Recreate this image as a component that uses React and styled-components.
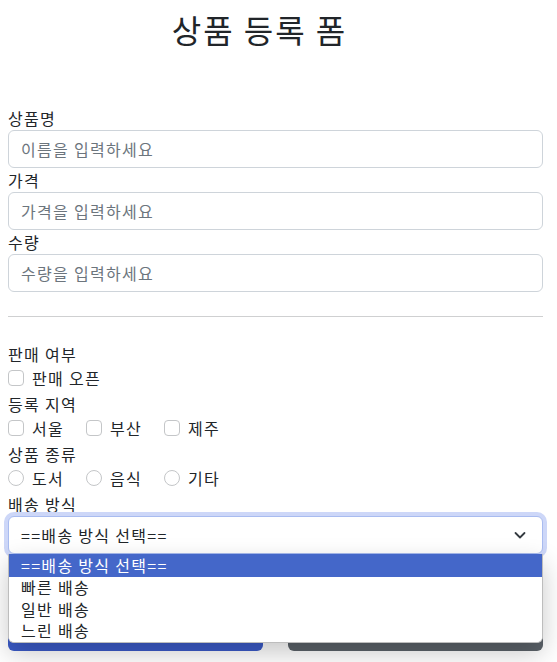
import React from "react";
import styled, { createGlobalStyle } from "styled-components";

const GlobalStyle = createGlobalStyle`
  html, body { margin: 0; padding: 0; background: #ffffff; }
  body {
    font-family: "Noto Sans CJK KR", "Noto Sans", sans-serif;
    color: #212529;
    font-size: 16px;
    letter-spacing: 1.3px;
  }
  * { box-sizing: border-box; }
`;

const Page = styled.div`
  padding: 10px 14px 0 8px;
  height: 662px;
  overflow: hidden;
`;

const Title = styled.h2`
  margin: 0 0 58px;
  padding-right: 32px;
  text-align: center;
  font-size: 32px;
  line-height: 38px;
  font-weight: 400;
  letter-spacing: 2px;
  color: #212529;
`;

const Label = styled.div`
  font-size: 16px;
  line-height: 24px;
  height: 24px;
  white-space: nowrap;
`;

const Input = styled.input`
  display: block;
  width: 100%;
  height: 38px;
  padding: 6px 12px;
  font-family: inherit;
  font-size: 16px;
  letter-spacing: 1.3px;
  line-height: 24px;
  color: #212529;
  border: 1px solid #ced4da;
  border-radius: 6px;
  background: #fff;
  outline: none;
  &::placeholder { color: #6c757d; }
`;

const Divider = styled.hr`
  margin: 24px 0 25px;
  border: 0;
  border-top: 1px solid #cfd0d1;
`;

const CheckRow = styled.div`
  display: flex;
  height: 24px;
  margin-bottom: 2px;
`;

const CheckItem = styled.label`
  display: flex;
  align-items: flex-start;
  gap: 8px;
  width: ${(p) => (p.$wide ? "auto" : "78px")};
  flex: none;
  white-space: nowrap;
  line-height: 24px;
  font-size: 16px;
`;

const Box = styled.span`
  flex: none;
  width: 16px;
  height: 16px;
  margin-top: 4px;
  border: 1px solid #c4c6c8;
  border-radius: ${(p) => (p.$round ? "50%" : "4px")};
  background: #fff;
`;

const SelectWrap = styled.div`
  position: relative;
`;

const SelectBox = styled.div`
  display: flex;
  align-items: center;
  justify-content: space-between;
  height: 38px;
  padding: 6px 14px 6px 12px;
  border: 1px solid #a9bcf0;
  border-radius: 6px;
  box-shadow: 0 0 0 4px #cdd7f8;
  background: #fff;
  font-size: 16px;
  line-height: 24px;
`;

const Popup = styled.div`
  position: absolute;
  top: 100%;
  left: 0;
  right: 0;
  z-index: 5;
  background: #fff;
  border: 1px solid #bdbdbd;
  border-top: 0;
  border-radius: 0 0 6px 6px;
  overflow: hidden;
  box-shadow: 0 10px 26px rgba(0, 0, 0, 0.22);
`;

const Option = styled.div`
  height: ${(p) => (p.$first ? "23px" : "21.5px")};
  line-height: ${(p) => (p.$first ? "23px" : "21.5px")};
  padding-left: 12px;
  font-size: 16px;
  white-space: nowrap;
  background: ${(p) => (p.$active ? "#4467c9" : "#fff")};
  color: ${(p) => (p.$active ? "#fff" : "#212529")};
`;

const ButtonRow = styled.div`
  display: flex;
  gap: 25px;
  margin-top: 51px;
`;

const Button = styled.button`
  flex: 1;
  height: 46px;
  border: 0;
  border-radius: 6px;
  font-family: inherit;
  font-size: 16px;
  color: #fff;
  background: ${(p) => (p.$variant === "secondary" ? "#5c636a" : "#3b5bc8")};
`;

function Chevron() {
  return (
    <svg width="16" height="16" viewBox="0 0 16 16" fill="none">
      <path
        d="M3.5 6l4.5 4.5L12.5 6"
        stroke="#343a40"
        strokeWidth="1.8"
        strokeLinecap="round"
        strokeLinejoin="round"
      />
    </svg>
  );
}

function Check({ round, wide, children }) {
  return (
    <CheckItem $wide={wide}>
      <Box $round={round} />
      {children}
    </CheckItem>
  );
}

export default function App() {
  return (
    <>
      <GlobalStyle />
      <Page>
        <Title>상품 등록 폼</Title>

        <Label>상품명</Label>
        <Input placeholder="이름을 입력하세요" />
        <Label>가격</Label>
        <Input placeholder="가격을 입력하세요" />
        <Label>수량</Label>
        <Input placeholder="수량을 입력하세요" />

        <Divider />

        <Label>판매 여부</Label>
        <CheckRow>
          <Check wide>판매 오픈</Check>
        </CheckRow>

        <Label>등록 지역</Label>
        <CheckRow>
          <Check>서울</Check>
          <Check>부산</Check>
          <Check>제주</Check>
        </CheckRow>

        <Label>상품 종류</Label>
        <CheckRow>
          <Check round>도서</Check>
          <Check round>음식</Check>
          <Check round>기타</Check>
        </CheckRow>

        <Label>배송 방식</Label>
        <SelectWrap>
          <SelectBox>
            <span>==배송 방식 선택==</span>
            <Chevron />
          </SelectBox>
          <Popup>
            <Option $active $first>==배송 방식 선택==</Option>
            <Option>빠른 배송</Option>
            <Option>일반 배송</Option>
            <Option>느린 배송</Option>
          </Popup>
        </SelectWrap>

        <ButtonRow>
          <Button aria-label="등록" />
          <Button aria-label="취소" $variant="secondary" />
        </ButtonRow>
      </Page>
    </>
  );
}
